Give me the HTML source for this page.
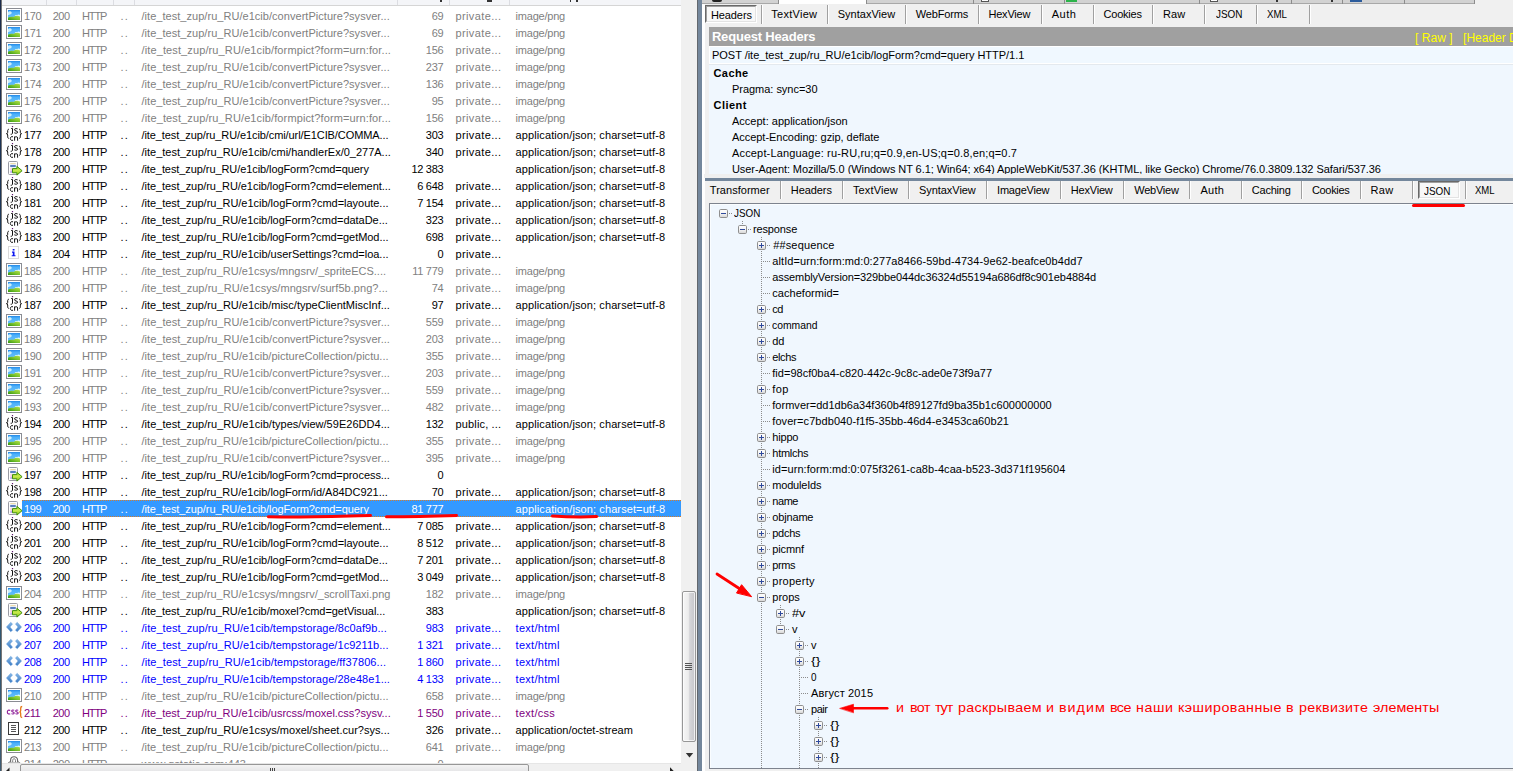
<!DOCTYPE html>
<html><head><meta charset="utf-8"><title>Fiddler</title>
<style>
*{box-sizing:border-box;margin:0;padding:0}
html,body{width:1513px;height:771px;overflow:hidden}
body{position:relative;background:#f0f0f0;font-family:"Liberation Sans",sans-serif;font-size:11px;color:#000}
.a{position:absolute}
.t{position:absolute;white-space:pre;line-height:17px;height:17px}
#list{position:absolute;left:2px;top:0;width:679px;height:763px;background:#fff;overflow:hidden}
.r{position:absolute;left:0;width:679px;height:17px}
.r span{position:absolute;top:1px;white-space:pre;line-height:17px;height:17px}
.r svg{position:absolute;left:3px;top:0}
.c1{left:22.1px;letter-spacing:-0.45px}
.c2{left:50.7px;letter-spacing:-0.45px}
.c3{left:80px;letter-spacing:-1.1px}
.c4{left:118.6px;letter-spacing:1.2px}
.c5{left:139.5px;letter-spacing:0.045px}
.c6{right:237.7px;letter-spacing:-0.3px}
.c7{left:453.5px;letter-spacing:0.38px}
.c8{left:513.6px;letter-spacing:0.1px}
.tab{position:absolute;white-space:pre;line-height:14px;height:14px}
.sep{position:absolute;width:2px;height:19px;border-left:1px solid #a0a0a0;border-right:1px solid #fff}
.tr{position:absolute;white-space:pre;line-height:16px;height:16px}
.b{font-weight:bold}
</style></head><body>

<svg width="0" height="0" style="position:absolute">
<defs>
<linearGradient id="gsky" x1="0" y1="0" x2="0" y2="1"><stop offset="0" stop-color="#2388e6"/><stop offset=".22" stop-color="#4cb0fa"/><stop offset="1" stop-color="#70c6fb"/></linearGradient>
<linearGradient id="ggr" x1="0" y1="1" x2="1" y2="0"><stop offset="0" stop-color="#2f9410"/><stop offset=".5" stop-color="#7cc42e"/><stop offset="1" stop-color="#b4e048"/></linearGradient>
<linearGradient id="gar" x1="0" y1="0" x2="0" y2="1"><stop offset="0" stop-color="#a6d822"/><stop offset=".45" stop-color="#c8ea50"/><stop offset="1" stop-color="#8cc80a"/></linearGradient>
<linearGradient id="gch" x1="0" y1="0" x2="0" y2="1"><stop offset="0" stop-color="#86b8e8"/><stop offset="1" stop-color="#3c7cc4"/></linearGradient>
<linearGradient id="gbx" x1="0" y1="0" x2="0" y2="1"><stop offset="0" stop-color="#ffffff"/><stop offset=".5" stop-color="#f4f4f4"/><stop offset="1" stop-color="#d4d4d4"/></linearGradient>
<symbol id="i-img" viewBox="0 0 20 17">
 <rect x="1.5" y="1.5" width="15" height="13" fill="#fff" stroke="#8a8c93"/>
 <rect x="3" y="3" width="12" height="10" fill="url(#gsky)"/>
 <path d="M3 5.2c.9-1.2 3-1.3 3.6.1.5 1.200-.8 2.400-2 2.100-.6.700-1.200.600-1.600.500z" fill="#d6f4fb" opacity=".9"/>
 <path d="M9.700 8.900c.4-1 1.700-1.200 2.400-.6.500-1 2.200-1.300 2.900-.3v2.500h-5.300z" fill="#e0f9fc" opacity=".95"/>
 <path d="M3 10.800c1.400-.9 3.600-1 5.400-.9 1.600-1.100 4.200-1.500 6.600-.5v3.600h-12z" fill="url(#ggr)"/>
</symbol>
<symbol id="i-json" viewBox="0 0 20 17">
 <g fill="none" stroke="#111" stroke-width="1" stroke-linecap="butt">
  <path d="M3.900 3.300c-1 0-1.200.5-1.200 1.400v1.700c0 .8-.4 1.200-1.300 1.300.9.100 1.300.5 1.300 1.300v1.900c0 .9.200 1.400 1.200 1.400"/>
  <path d="M14.100 3.300c1 0 1.200.5 1.200 1.400v1.700c0 .8.400 1.200 1.300 1.300-.9.100-1.300.5-1.300 1.300v1.900c0 .9-.2 1.400-1.200 1.400"/>
  <path d="M6.200 2.500h1.300v4.600c0 .9-.6 1.200-1.800 1.200"/>
  <path d="M12.600 2.900c-.6-.4-3.100-.7-3.100.9 0 1.600 3.200.8 3.200 2.300 0 1.400-2.600 1.300-3.400.7"/>
  <path d="M8 10.800c-1.700-.6-2.700.4-2.700 1.700 0 1.500 1.200 2.300 2.700 1.700"/>
  <path d="M9.600 14.700v-4.200M9.600 11.500c.7-.9 3-1.300 3 .5v2.700"/>
 </g>
 <rect x="6.900" y=".1" width="1.200" height="1.100" fill="#500060"/>
</symbol>
<symbol id="i-post" viewBox="0 0 20 17"><g transform="translate(-2 0)">
 <rect x="5.500" y="1.500" width="9" height="13" rx="1" fill="#fdfdfd" stroke="#999ba3"/>
 <rect x="7.300" y="3.200" width="5.400" height=".9" fill="#e6d49a"/>
 <rect x="7.200" y="4.900" width="5.600" height="2.200" fill="#587fc0"/>
 <rect x="7.200" y="8" width="2" height="2.800" fill="#f7cfe0"/>
 <rect x="7.200" y="10.800" width="2" height="2.200" fill="#c7b0ee"/>
 <path d="M9.500 8.600h4.400v-2.300l5.200 4.400-5.200 4.400v-2.300h-4.400z" fill="url(#gar)" stroke="#3e8e0e" stroke-width="1" stroke-linejoin="round"/>
</g></symbol>
<symbol id="i-info" viewBox="0 0 20 17"><g transform="translate(-2 -1)">
 <rect x="5.500" y="2.500" width="10" height="12" fill="#fff" stroke="#b4b4b4" stroke-dasharray="1 1"/>
 <rect x="9.700" y="5" width="1.800" height="1.500" fill="#0a14f0"/>
 <path d="M9 7.600h2.500v3.600h1v1.100h-3.800v-1.100h1.100v-2.500h-.8z" fill="#0a14f0"/>
</g></symbol>
<symbol id="i-html" viewBox="0 0 20 17"><g transform="translate(-2 0)">
 <path d="M7.700 3.300l1.900 1.600-2.600 3.100 2.600 3.200-1.900 1.500-4.300-4.700z" fill="url(#gch)" stroke="#5b94d4" stroke-width=".4"/>
 <path d="M14.300 3.300l-1.900 1.600 2.600 3.100-2.600 3.200 1.900 1.500 4.300-4.700z" fill="url(#gch)" stroke="#5b94d4" stroke-width=".4"/>
</g></symbol>
<symbol id="i-css" viewBox="0 0 20 17"><g transform="translate(-2 0)">
 <g fill="none" stroke="#8c1a96" stroke-width="1.100">
  <path d="M7.200 6.400c-1.400-.7-2.900-.2-2.900 1.700 0 1.800 1.500 2.300 2.900 1.600"/>
  <path d="M11.200 6.400c-.7-.5-2.500-.6-2.500.6 0 1.300 2.500.6 2.500 2 0 1.200-2 1.100-2.700.6"/>
  <path d="M15.200 6.400c-.7-.5-2.500-.6-2.500.6 0 1.300 2.500.6 2.500 2 0 1.200-2 1.100-2.700.6"/>
 </g>
 <path d="M19.200 2.500c-1.400 0-1.500.6-1.500 1.500v2.600c0 .9-.3 1.300-1.200 1.400.9.100 1.200.5 1.200 1.400v2.600c0 .9.100 1.500 1.500 1.500" fill="none" stroke="#e67817" stroke-width="1.300"/>
</g></symbol>
<symbol id="i-doc" viewBox="0 0 20 17"><g transform="translate(-2 0)">
 <rect x="5.500" y="1.500" width="10" height="12" fill="#fff" stroke="#3a3a3a"/>
 <path d="M8 4.500h5M8 6.500h5M8 8.500h5M8 10.500h5" stroke="#555" stroke-width="1"/>
</g></symbol>
<symbol id="i-lock" viewBox="0 0 20 17">
 <path d="M5.600 7.200v-2c0-4.600 7-4.600 7 0v2" fill="none" stroke="#666" stroke-width="1.100"/>
 <path d="M7.700 7.200v-1.800c0-2.200 2.800-2.200 2.800 0v1.800" fill="none" stroke="#777" stroke-width="1"/>
 <path d="M3.500 8l1.600-1.800M14.700 8l-1.600-1.800" stroke="#888" stroke-width="1"/>
 <rect x="3.500" y="8" width="11.200" height="7" fill="#e6e6e6" stroke="#888"/>
</symbol>
<symbol id="bx-p" viewBox="0 0 9 9">
 <rect x=".5" y=".5" width="8" height="8" rx="1.200" fill="url(#gbx)" stroke="#8f8f8f"/>
 <path d="M2 4.500h5M4.500 2v5" stroke="#2f4a9c" stroke-width="1"/>
</symbol>
<symbol id="bx-m" viewBox="0 0 9 9">
 <rect x=".5" y=".5" width="8" height="8" rx="1.200" fill="url(#gbx)" stroke="#8f8f8f"/>
 <path d="M2 4.500h5" stroke="#2f4a9c" stroke-width="1"/>
</symbol>
</defs></svg>

<div class="a" style="left:0;top:0;width:2px;height:771px;background:#777"></div>
<div class="a" style="left:0;top:0;width:1.400px;height:771px;background:linear-gradient(#1b2b4b 0,#1c3556 25%,#1f4b68 50%,#2c5470 75%,#3d5b73 100%)"></div>
<div id="list">
<div class="a" style="left:0;top:0;width:679px;height:5px;background:#f4f5f8"></div>
<div class="a" style="left:0;top:5px;width:679px;height:1px;background:#d5d5d5"></div>
<div class="a" style="left:44px;top:0;width:1px;height:5px;background:#dcdde2"></div>
<div class="a" style="left:74px;top:0;width:1px;height:5px;background:#dcdde2"></div>
<div class="a" style="left:111px;top:0;width:1px;height:5px;background:#dcdde2"></div>
<div class="a" style="left:132px;top:0;width:1px;height:5px;background:#dcdde2"></div>
<div class="a" style="left:395px;top:0;width:1px;height:5px;background:#dcdde2"></div>
<div class="a" style="left:447px;top:0;width:1px;height:5px;background:#dcdde2"></div>
<div class="a" style="left:507px;top:0;width:1px;height:5px;background:#dcdde2"></div>
<div class="a" style="left:438px;top:0;width:1.6px;height:1.5px;background:#333"></div>
<div class="a" style="left:484.5px;top:0;width:5px;height:1.5px;background:#333"></div>
<div class="a" style="left:567.7px;top:0;width:1.6px;height:1.5px;background:#333"></div>
<div class="a" style="left:574px;top:0;width:1.6px;height:1.5px;background:#333"></div>
<div class="r" style="top:7px;color:#808080">
<svg width="20" height="17"><use href="#i-img"/></svg>
<span class="c1">170</span><span class="c2">200</span><span class="c3">HTTP</span><span class="c4">..</span><span class="c5" style="letter-spacing:0.037px">/ite_test_zup/ru_RU/e1cib/convertPicture?sysver...</span><span class="c6">69</span><span class="c7">private...</span><span class="c8" style="letter-spacing:-0.22px">image/png</span></div>
<div class="r" style="top:24px;color:#808080">
<svg width="20" height="17"><use href="#i-img"/></svg>
<span class="c1">171</span><span class="c2">200</span><span class="c3">HTTP</span><span class="c4">..</span><span class="c5" style="letter-spacing:0.037px">/ite_test_zup/ru_RU/e1cib/convertPicture?sysver...</span><span class="c6">69</span><span class="c7">private...</span><span class="c8" style="letter-spacing:-0.22px">image/png</span></div>
<div class="r" style="top:41px;color:#808080">
<svg width="20" height="17"><use href="#i-img"/></svg>
<span class="c1">172</span><span class="c2">200</span><span class="c3">HTTP</span><span class="c4">..</span><span class="c5" style="letter-spacing:0.118px">/ite_test_zup/ru_RU/e1cib/formpict?form=urn:for...</span><span class="c6">156</span><span class="c7">private...</span><span class="c8" style="letter-spacing:-0.22px">image/png</span></div>
<div class="r" style="top:58px;color:#808080">
<svg width="20" height="17"><use href="#i-img"/></svg>
<span class="c1">173</span><span class="c2">200</span><span class="c3">HTTP</span><span class="c4">..</span><span class="c5" style="letter-spacing:0.037px">/ite_test_zup/ru_RU/e1cib/convertPicture?sysver...</span><span class="c6">237</span><span class="c7">private...</span><span class="c8" style="letter-spacing:-0.22px">image/png</span></div>
<div class="r" style="top:75px;color:#808080">
<svg width="20" height="17"><use href="#i-img"/></svg>
<span class="c1">174</span><span class="c2">200</span><span class="c3">HTTP</span><span class="c4">..</span><span class="c5" style="letter-spacing:0.037px">/ite_test_zup/ru_RU/e1cib/convertPicture?sysver...</span><span class="c6">136</span><span class="c7">private...</span><span class="c8" style="letter-spacing:-0.22px">image/png</span></div>
<div class="r" style="top:92px;color:#808080">
<svg width="20" height="17"><use href="#i-img"/></svg>
<span class="c1">175</span><span class="c2">200</span><span class="c3">HTTP</span><span class="c4">..</span><span class="c5" style="letter-spacing:0.037px">/ite_test_zup/ru_RU/e1cib/convertPicture?sysver...</span><span class="c6">95</span><span class="c7">private...</span><span class="c8" style="letter-spacing:-0.22px">image/png</span></div>
<div class="r" style="top:109px;color:#808080">
<svg width="20" height="17"><use href="#i-img"/></svg>
<span class="c1">176</span><span class="c2">200</span><span class="c3">HTTP</span><span class="c4">..</span><span class="c5" style="letter-spacing:0.118px">/ite_test_zup/ru_RU/e1cib/formpict?form=urn:for...</span><span class="c6">156</span><span class="c7">private...</span><span class="c8" style="letter-spacing:-0.22px">image/png</span></div>
<div class="r" style="top:126px;color:#000">
<svg width="20" height="17"><use href="#i-json"/></svg>
<span class="c1">177</span><span class="c2">200</span><span class="c3">HTTP</span><span class="c4">..</span><span class="c5" style="letter-spacing:-0.090px">/ite_test_zup/ru_RU/e1cib/cmi/url/E1CIB/COMMA...</span><span class="c6">303</span><span class="c7">private...</span><span class="c8">application/json; charset=utf-8</span></div>
<div class="r" style="top:143px;color:#000">
<svg width="20" height="17"><use href="#i-json"/></svg>
<span class="c1">178</span><span class="c2">200</span><span class="c3">HTTP</span><span class="c4">..</span><span class="c5" style="letter-spacing:-0.004px">/ite_test_zup/ru_RU/e1cib/cmi/handlerEx/0_277A...</span><span class="c6">340</span><span class="c7">private...</span><span class="c8">application/json; charset=utf-8</span></div>
<div class="r" style="top:160px;color:#000">
<svg width="20" height="17"><use href="#i-post"/></svg>
<span class="c1">179</span><span class="c2">200</span><span class="c3">HTTP</span><span class="c4">..</span><span class="c5" style="letter-spacing:-0.081px">/ite_test_zup/ru_RU/e1cib/logForm?cmd=query</span><span class="c6">12 383</span><span class="c8">application/json; charset=utf-8</span></div>
<div class="r" style="top:177px;color:#000">
<svg width="20" height="17"><use href="#i-json"/></svg>
<span class="c1">180</span><span class="c2">200</span><span class="c3">HTTP</span><span class="c4">..</span><span class="c5" style="letter-spacing:-0.049px">/ite_test_zup/ru_RU/e1cib/logForm?cmd=element...</span><span class="c6">6 648</span><span class="c7">private...</span><span class="c8">application/json; charset=utf-8</span></div>
<div class="r" style="top:194px;color:#000">
<svg width="20" height="17"><use href="#i-json"/></svg>
<span class="c1">181</span><span class="c2">200</span><span class="c3">HTTP</span><span class="c4">..</span><span class="c5" style="letter-spacing:-0.020px">/ite_test_zup/ru_RU/e1cib/logForm?cmd=layoute...</span><span class="c6">7 154</span><span class="c7">private...</span><span class="c8">application/json; charset=utf-8</span></div>
<div class="r" style="top:211px;color:#000">
<svg width="20" height="17"><use href="#i-json"/></svg>
<span class="c1">182</span><span class="c2">200</span><span class="c3">HTTP</span><span class="c4">..</span><span class="c5" style="letter-spacing:-0.036px">/ite_test_zup/ru_RU/e1cib/logForm?cmd=dataDe...</span><span class="c6">323</span><span class="c7">private...</span><span class="c8">application/json; charset=utf-8</span></div>
<div class="r" style="top:228px;color:#000">
<svg width="20" height="17"><use href="#i-json"/></svg>
<span class="c1">183</span><span class="c2">200</span><span class="c3">HTTP</span><span class="c4">..</span><span class="c5" style="letter-spacing:-0.047px">/ite_test_zup/ru_RU/e1cib/logForm?cmd=getMod...</span><span class="c6">698</span><span class="c7">private...</span><span class="c8">application/json; charset=utf-8</span></div>
<div class="r" style="top:245px;color:#000">
<svg width="20" height="17"><use href="#i-info"/></svg>
<span class="c1">184</span><span class="c2">204</span><span class="c3">HTTP</span><span class="c4">..</span><span class="c5" style="letter-spacing:-0.020px">/ite_test_zup/ru_RU/e1cib/userSettings?cmd=loa...</span><span class="c6">0</span><span class="c7">private...</span></div>
<div class="r" style="top:262px;color:#808080">
<svg width="20" height="17"><use href="#i-img"/></svg>
<span class="c1">185</span><span class="c2">200</span><span class="c3">HTTP</span><span class="c4">..</span><span class="c5" style="letter-spacing:-0.001px">/ite_test_zup/ru_RU/e1csys/mngsrv/_spriteECS....</span><span class="c6">11 779</span><span class="c7">private...</span><span class="c8" style="letter-spacing:-0.22px">image/png</span></div>
<div class="r" style="top:279px;color:#808080">
<svg width="20" height="17"><use href="#i-img"/></svg>
<span class="c1">186</span><span class="c2">200</span><span class="c3">HTTP</span><span class="c4">..</span><span class="c5" style="letter-spacing:0.050px">/ite_test_zup/ru_RU/e1csys/mngsrv/surf5b.png?...</span><span class="c6">74</span><span class="c7">private...</span><span class="c8" style="letter-spacing:-0.22px">image/png</span></div>
<div class="r" style="top:296px;color:#000">
<svg width="20" height="17"><use href="#i-json"/></svg>
<span class="c1">187</span><span class="c2">200</span><span class="c3">HTTP</span><span class="c4">..</span><span class="c5" style="letter-spacing:0.004px">/ite_test_zup/ru_RU/e1cib/misc/typeClientMiscInf...</span><span class="c6">97</span><span class="c7">private...</span><span class="c8">application/json; charset=utf-8</span></div>
<div class="r" style="top:313px;color:#808080">
<svg width="20" height="17"><use href="#i-img"/></svg>
<span class="c1">188</span><span class="c2">200</span><span class="c3">HTTP</span><span class="c4">..</span><span class="c5" style="letter-spacing:0.041px">/ite_test_zup/ru_RU/e1cib/convertPicture?sysver...</span><span class="c6">559</span><span class="c7">private...</span><span class="c8" style="letter-spacing:-0.22px">image/png</span></div>
<div class="r" style="top:330px;color:#808080">
<svg width="20" height="17"><use href="#i-img"/></svg>
<span class="c1">189</span><span class="c2">200</span><span class="c3">HTTP</span><span class="c4">..</span><span class="c5" style="letter-spacing:0.041px">/ite_test_zup/ru_RU/e1cib/convertPicture?sysver...</span><span class="c6">203</span><span class="c7">private...</span><span class="c8" style="letter-spacing:-0.22px">image/png</span></div>
<div class="r" style="top:347px;color:#808080">
<svg width="20" height="17"><use href="#i-img"/></svg>
<span class="c1">190</span><span class="c2">200</span><span class="c3">HTTP</span><span class="c4">..</span><span class="c5" style="letter-spacing:0.012px">/ite_test_zup/ru_RU/e1cib/pictureCollection/pictu...</span><span class="c6">355</span><span class="c7">private...</span><span class="c8" style="letter-spacing:-0.22px">image/png</span></div>
<div class="r" style="top:364px;color:#808080">
<svg width="20" height="17"><use href="#i-img"/></svg>
<span class="c1">191</span><span class="c2">200</span><span class="c3">HTTP</span><span class="c4">..</span><span class="c5" style="letter-spacing:0.041px">/ite_test_zup/ru_RU/e1cib/convertPicture?sysver...</span><span class="c6">203</span><span class="c7">private...</span><span class="c8" style="letter-spacing:-0.22px">image/png</span></div>
<div class="r" style="top:381px;color:#808080">
<svg width="20" height="17"><use href="#i-img"/></svg>
<span class="c1">192</span><span class="c2">200</span><span class="c3">HTTP</span><span class="c4">..</span><span class="c5" style="letter-spacing:0.041px">/ite_test_zup/ru_RU/e1cib/convertPicture?sysver...</span><span class="c6">559</span><span class="c7">private...</span><span class="c8" style="letter-spacing:-0.22px">image/png</span></div>
<div class="r" style="top:398px;color:#808080">
<svg width="20" height="17"><use href="#i-img"/></svg>
<span class="c1">193</span><span class="c2">200</span><span class="c3">HTTP</span><span class="c4">..</span><span class="c5" style="letter-spacing:0.041px">/ite_test_zup/ru_RU/e1cib/convertPicture?sysver...</span><span class="c6">482</span><span class="c7">private...</span><span class="c8" style="letter-spacing:-0.22px">image/png</span></div>
<div class="r" style="top:415px;color:#000">
<svg width="20" height="17"><use href="#i-json"/></svg>
<span class="c1">194</span><span class="c2">200</span><span class="c3">HTTP</span><span class="c4">..</span><span class="c5" style="letter-spacing:0.029px">/ite_test_zup/ru_RU/e1cib/types/view/59E26DD4...</span><span class="c6">132</span><span class="c7" style="letter-spacing:0.15px">public, ...</span><span class="c8">application/json; charset=utf-8</span></div>
<div class="r" style="top:432px;color:#808080">
<svg width="20" height="17"><use href="#i-img"/></svg>
<span class="c1">195</span><span class="c2">200</span><span class="c3">HTTP</span><span class="c4">..</span><span class="c5" style="letter-spacing:0.012px">/ite_test_zup/ru_RU/e1cib/pictureCollection/pictu...</span><span class="c6">355</span><span class="c7">private...</span><span class="c8" style="letter-spacing:-0.22px">image/png</span></div>
<div class="r" style="top:449px;color:#808080">
<svg width="20" height="17"><use href="#i-img"/></svg>
<span class="c1">196</span><span class="c2">200</span><span class="c3">HTTP</span><span class="c4">..</span><span class="c5" style="letter-spacing:0.041px">/ite_test_zup/ru_RU/e1cib/convertPicture?sysver...</span><span class="c6">395</span><span class="c7">private...</span><span class="c8" style="letter-spacing:-0.22px">image/png</span></div>
<div class="r" style="top:466px;color:#000">
<svg width="20" height="17"><use href="#i-post"/></svg>
<span class="c1">197</span><span class="c2">200</span><span class="c3">HTTP</span><span class="c4">..</span><span class="c5" style="letter-spacing:-0.055px">/ite_test_zup/ru_RU/e1cib/logForm?cmd=process...</span><span class="c6">0</span></div>
<div class="r" style="top:483px;color:#000">
<svg width="20" height="17"><use href="#i-json"/></svg>
<span class="c1">198</span><span class="c2">200</span><span class="c3">HTTP</span><span class="c4">..</span><span class="c5" style="letter-spacing:-0.028px">/ite_test_zup/ru_RU/e1cib/logForm/id/A84DC921...</span><span class="c6">70</span><span class="c7">private...</span><span class="c8">application/json; charset=utf-8</span></div>
<div class="r" style="top:500px;color:#fff">
<div class="a" style="left:20px;top:0;width:659px;height:17px;background:#3399ff;border-top:1px dotted #d67c2a;border-bottom:1px dotted #d67c2a"></div>
<svg width="20" height="17"><use href="#i-post"/></svg>
<span class="c1">199</span><span class="c2">200</span><span class="c3">HTTP</span><span class="c4">..</span><span class="c5" style="letter-spacing:-0.081px">/ite_test_zup/ru_RU/e1cib/logForm?cmd=query</span><span class="c6">81 777</span><span class="c8">application/json; charset=utf-8</span></div>
<div class="r" style="top:517px;color:#000">
<svg width="20" height="17"><use href="#i-json"/></svg>
<span class="c1">200</span><span class="c2">200</span><span class="c3">HTTP</span><span class="c4">..</span><span class="c5" style="letter-spacing:-0.049px">/ite_test_zup/ru_RU/e1cib/logForm?cmd=element...</span><span class="c6">7 085</span><span class="c7">private...</span><span class="c8">application/json; charset=utf-8</span></div>
<div class="r" style="top:534px;color:#000">
<svg width="20" height="17"><use href="#i-json"/></svg>
<span class="c1">201</span><span class="c2">200</span><span class="c3">HTTP</span><span class="c4">..</span><span class="c5" style="letter-spacing:-0.020px">/ite_test_zup/ru_RU/e1cib/logForm?cmd=layoute...</span><span class="c6">8 512</span><span class="c7">private...</span><span class="c8">application/json; charset=utf-8</span></div>
<div class="r" style="top:551px;color:#000">
<svg width="20" height="17"><use href="#i-json"/></svg>
<span class="c1">202</span><span class="c2">200</span><span class="c3">HTTP</span><span class="c4">..</span><span class="c5" style="letter-spacing:-0.036px">/ite_test_zup/ru_RU/e1cib/logForm?cmd=dataDe...</span><span class="c6">7 201</span><span class="c7">private...</span><span class="c8">application/json; charset=utf-8</span></div>
<div class="r" style="top:568px;color:#000">
<svg width="20" height="17"><use href="#i-json"/></svg>
<span class="c1">203</span><span class="c2">200</span><span class="c3">HTTP</span><span class="c4">..</span><span class="c5" style="letter-spacing:-0.047px">/ite_test_zup/ru_RU/e1cib/logForm?cmd=getMod...</span><span class="c6">3 049</span><span class="c7">private...</span><span class="c8">application/json; charset=utf-8</span></div>
<div class="r" style="top:585px;color:#808080">
<svg width="20" height="17"><use href="#i-img"/></svg>
<span class="c1">204</span><span class="c2">200</span><span class="c3">HTTP</span><span class="c4">..</span><span class="c5" style="letter-spacing:-0.012px">/ite_test_zup/ru_RU/e1csys/mngsrv/_scrollTaxi.png</span><span class="c6">182</span><span class="c7">private...</span><span class="c8" style="letter-spacing:-0.22px">image/png</span></div>
<div class="r" style="top:602px;color:#000">
<svg width="20" height="17"><use href="#i-post"/></svg>
<span class="c1">205</span><span class="c2">200</span><span class="c3">HTTP</span><span class="c4">..</span><span class="c5" style="letter-spacing:-0.056px">/ite_test_zup/ru_RU/e1cib/moxel?cmd=getVisual...</span><span class="c6">383</span><span class="c8">application/json; charset=utf-8</span></div>
<div class="r" style="top:619px;color:#0000ff">
<svg width="20" height="17"><use href="#i-html"/></svg>
<span class="c1">206</span><span class="c2">200</span><span class="c3">HTTP</span><span class="c4">..</span><span class="c5" style="letter-spacing:0.065px">/ite_test_zup/ru_RU/e1cib/tempstorage/8c0af9b...</span><span class="c6">983</span><span class="c7">private...</span><span class="c8" style="letter-spacing:0.28px">text/html</span></div>
<div class="r" style="top:636px;color:#0000ff">
<svg width="20" height="17"><use href="#i-html"/></svg>
<span class="c1">207</span><span class="c2">200</span><span class="c3">HTTP</span><span class="c4">..</span><span class="c5" style="letter-spacing:0.056px">/ite_test_zup/ru_RU/e1cib/tempstorage/1c9211b...</span><span class="c6">1 321</span><span class="c7">private...</span><span class="c8" style="letter-spacing:0.28px">text/html</span></div>
<div class="r" style="top:653px;color:#0000ff">
<svg width="20" height="17"><use href="#i-html"/></svg>
<span class="c1">208</span><span class="c2">200</span><span class="c3">HTTP</span><span class="c4">..</span><span class="c5" style="letter-spacing:0.106px">/ite_test_zup/ru_RU/e1cib/tempstorage/ff37806...</span><span class="c6">1 860</span><span class="c7">private...</span><span class="c8" style="letter-spacing:0.28px">text/html</span></div>
<div class="r" style="top:670px;color:#0000ff">
<svg width="20" height="17"><use href="#i-html"/></svg>
<span class="c1">209</span><span class="c2">200</span><span class="c3">HTTP</span><span class="c4">..</span><span class="c5" style="letter-spacing:0.055px">/ite_test_zup/ru_RU/e1cib/tempstorage/28e48e1...</span><span class="c6">4 133</span><span class="c7">private...</span><span class="c8" style="letter-spacing:0.28px">text/html</span></div>
<div class="r" style="top:687px;color:#808080">
<svg width="20" height="17"><use href="#i-img"/></svg>
<span class="c1">210</span><span class="c2">200</span><span class="c3">HTTP</span><span class="c4">..</span><span class="c5" style="letter-spacing:0.012px">/ite_test_zup/ru_RU/e1cib/pictureCollection/pictu...</span><span class="c6">658</span><span class="c7">private...</span><span class="c8" style="letter-spacing:-0.22px">image/png</span></div>
<div class="r" style="top:704px;color:#800080">
<svg width="20" height="17"><use href="#i-css"/></svg>
<span class="c1">211</span><span class="c2">200</span><span class="c3">HTTP</span><span class="c4">..</span><span class="c5" style="letter-spacing:-0.013px">/ite_test_zup/ru_RU/e1cib/usrcss/moxel.css?sysv...</span><span class="c6">1 550</span><span class="c7">private...</span><span class="c8" style="letter-spacing:0.28px">text/css</span></div>
<div class="r" style="top:721px;color:#000">
<svg width="20" height="17"><use href="#i-doc"/></svg>
<span class="c1">212</span><span class="c2">200</span><span class="c3">HTTP</span><span class="c4">..</span><span class="c5" style="letter-spacing:0.027px">/ite_test_zup/ru_RU/e1csys/moxel/sheet.cur?sys...</span><span class="c6">326</span><span class="c7">private...</span><span class="c8" style="letter-spacing:0.02px">application/octet-stream</span></div>
<div class="r" style="top:738px;color:#808080">
<svg width="20" height="17"><use href="#i-img"/></svg>
<span class="c1">213</span><span class="c2">200</span><span class="c3">HTTP</span><span class="c4">..</span><span class="c5" style="letter-spacing:0.012px">/ite_test_zup/ru_RU/e1cib/pictureCollection/pictu...</span><span class="c6">641</span><span class="c7">private...</span><span class="c8" style="letter-spacing:-0.22px">image/png</span></div>
<div class="r" style="top:755px;color:#808080">
<svg width="20" height="17"><use href="#i-lock"/></svg>
<span class="c1">214</span><span class="c2">200</span><span class="c3">HTTP</span><span class="c4">..</span><span class="c5" style="letter-spacing:0.065px">www.gstatic.com:443</span><span class="c6">0</span></div>
</div>
<div class="a" style="left:681px;top:0;width:16px;height:764px;background:#f0f0f0"></div>
<div class="a" style="left:682px;top:591px;width:14px;height:151px;border:1px solid #979797;border-radius:2px;background:linear-gradient(90deg,#f6f6f6 0,#ececec 45%,#d6d6d9 55%,#c6c6ca 100%);box-shadow:inset 0 0 0 1px rgba(255,255,255,.7)"></div>
<div class="a" style="left:685px;top:663px;width:7px;height:1px;background:#555"></div>
<div class="a" style="left:685px;top:665px;width:7px;height:1px;background:#555"></div>
<div class="a" style="left:685px;top:667px;width:7px;height:1px;background:#555"></div>
<div class="a" style="left:685px;top:669px;width:7px;height:1px;background:#555"></div>
<svg class="a" style="left:684px;top:751px" width="11" height="8"><path d="M1.800 2h7.400l-3.700 4.400z" fill="#333"/></svg>
<div class="a" style="left:2px;top:763px;width:695px;height:8px;background:#f0f0f0"></div>
<div class="a" style="left:2px;top:763px;width:679px;height:1px;background:#e6e6e6"></div>
<div class="a" style="left:20px;top:764px;width:509px;height:9px;border:1px solid #979797;border-radius:2px;background:linear-gradient(#f4f4f4,#e4e4e6)"></div>
<div class="a" style="left:270px;top:768px;width:1px;height:3px;background:#444"></div>
<div class="a" style="left:272px;top:768px;width:1px;height:3px;background:#444"></div>
<div class="a" style="left:274px;top:768px;width:1px;height:3px;background:#444"></div>
<svg class="a" style="left:3px;top:764px" width="9" height="7"><path d="M6.500 3.500l-3.500 3.500 3.500 3.500z" fill="#222"/></svg>
<svg class="a" style="left:667px;top:764px" width="9" height="7"><path d="M3 3.300l4 4-4 4z" fill="#222"/></svg>
<div class="a" style="left:697px;top:0;width:1px;height:771px;background:#62676d"></div>
<div class="a" style="left:698px;top:0;width:4px;height:771px;background:#74879c"></div>
<div class="a" style="left:702px;top:0;width:3px;height:771px;background:#fff"></div>
<div class="a" style="left:702px;top:0;width:772px;height:3px;background:#d2d2d2"></div>
<div class="a" style="left:702px;top:3px;width:772px;height:1px;background:#a8a8a8"></div>
<div class="a" style="left:778px;top:0;width:88px;height:4px;background:#fff"></div>
<div class="a" style="left:778px;top:0;width:1px;height:4px;background:#8c8c8c"></div>
<div class="a" style="left:866px;top:0;width:1px;height:4px;background:#8c8c8c"></div>
<div class="a" style="left:973px;top:0;width:1px;height:4px;background:#8c8c8c"></div>
<div class="a" style="left:1064px;top:0;width:1px;height:4px;background:#8c8c8c"></div>
<div class="a" style="left:1199px;top:0;width:1px;height:4px;background:#8c8c8c"></div>
<div class="a" style="left:1291px;top:0;width:1px;height:4px;background:#8c8c8c"></div>
<div class="a" style="left:1342px;top:0;width:1px;height:4px;background:#8c8c8c"></div>
<div class="a" style="left:1404px;top:0;width:1px;height:4px;background:#8c8c8c"></div>
<div class="a" style="left:1474px;top:0;width:1px;height:4px;background:#8c8c8c"></div>
<div class="a" style="left:1066px;top:0;width:11px;height:2px;background:#2cb34a"></div>
<div class="a" style="left:981px;top:0;width:8px;height:2px;background:#fff;border:1px solid #555;border-top:0"></div>
<div class="a" style="left:1210px;top:0;width:8px;height:2px;background:#fff;border:1px solid #555;border-top:0"></div>
<div class="a" style="left:1350px;top:0;width:12px;height:2px;background:#2c5c9c"></div>
<div class="a" style="left:1276px;top:0;width:2px;height:1.500px;background:#333"></div>
<div class="a" style="left:1331px;top:0;width:2px;height:1.500px;background:#333"></div>
<div class="a" style="left:712px;top:0;width:10px;height:1.5px;background:#222;border-radius:0 0 5px 5px"></div>
<div class="a" style="left:705px;top:5px;width:52px;height:18px;border:1px solid;border-color:#696969 #fff #fff #696969;background:#f8f8f8"></div>
<div class="a" style="left:706px;top:6px;width:50px;height:16px;border:1px solid;border-color:#a0a0a0 #e3e3e3 #e3e3e3 #a0a0a0"></div>
<div class="tab" style="left:710.90px;top:8px;letter-spacing:-0.080px;">Headers</div>
<div class="tab" style="left:771.30px;top:7px;letter-spacing:0.267px;">TextView</div>
<div class="tab" style="left:837.70px;top:7px;letter-spacing:0.013px;">SyntaxView</div>
<div class="tab" style="left:915.80px;top:7px;letter-spacing:-0.156px;">WebForms</div>
<div class="tab" style="left:988.40px;top:7px;letter-spacing:-0.186px;">HexView</div>
<div class="tab" style="left:1051.80px;top:7px;letter-spacing:0.453px;">Auth</div>
<div class="tab" style="left:1103.50px;top:7px;letter-spacing:-0.208px;">Cookies</div>
<div class="tab" style="left:1162.90px;top:7px;letter-spacing:0.142px;">Raw</div>
<div class="tab" style="left:1215.50px;top:7px;transform:scaleX(0.903);transform-origin:0 0;">JSON</div>
<div class="tab" style="left:1266.50px;top:7px;transform:scaleX(0.884);transform-origin:0 0;">XML</div>
<div class="sep" style="left:761px;top:5px"></div>
<div class="sep" style="left:827px;top:5px"></div>
<div class="sep" style="left:905px;top:5px"></div>
<div class="sep" style="left:978px;top:5px"></div>
<div class="sep" style="left:1041px;top:5px"></div>
<div class="sep" style="left:1093px;top:5px"></div>
<div class="sep" style="left:1152px;top:5px"></div>
<div class="sep" style="left:1204px;top:5px"></div>
<div class="sep" style="left:1256px;top:5px"></div>
<div class="sep" style="left:1309px;top:5px"></div>
<div class="a" style="left:709px;top:27px;width:804px;height:19px;background:#a0a0a0"></div>
<div class="tr" style="left:711.90px;top:29px;letter-spacing:-0.180px;font-size:13px;font-weight:bold;color:#fff">Request Headers</div>
<div class="tr" style="left:1415.10px;top:30px;letter-spacing:0.026px;font-size:12px;color:#ffff00">[ Raw ]</div>
<div class="tr" style="left:1463.10px;top:30px;font-size:12px;color:#ffff00">[Header Definitions]</div>
<div class="a" style="left:709px;top:46px;width:804px;height:19px;background:#fff"></div>
<div class="a" style="left:710px;top:47px;width:803px;height:16px;background:#f0f8ff"></div>
<div class="a" style="left:709px;top:64px;width:804px;height:1px;background:#e4e9ee"></div>
<div class="a" style="left:709px;top:65px;width:804px;height:109px;background:#f0f7fe;overflow:hidden" id="rq"></div>
<div class="tr" style="left:712.00px;top:47px;letter-spacing:-0.026px;">POST /ite_test_zup/ru_RU/e1cib/logForm?cmd=query HTTP/1.1</div>
<div class="tr" style="left:713.50px;top:65px;letter-spacing:0.417px;font-weight:bold">Cache</div>
<div class="tr" style="left:732.00px;top:81px;letter-spacing:-0.029px;">Pragma: sync=30</div>
<div class="tr" style="left:713.50px;top:97px;letter-spacing:0.487px;font-weight:bold">Client</div>
<div class="tr" style="left:732.00px;top:113px;letter-spacing:0.005px;">Accept: application/json</div>
<div class="tr" style="left:732.00px;top:129px;letter-spacing:-0.041px;">Accept-Encoding: gzip, deflate</div>
<div class="tr" style="left:732.00px;top:145px;letter-spacing:0.162px;">Accept-Language: ru-RU,ru;q=0.9,en-US;q=0.8,en;q=0.7</div>
<div class="tr" style="left:732.00px;top:161px;letter-spacing:-0.073px;">User-Agent: Mozilla/5.0 (Windows NT 6.1; Win64; x64) AppleWebKit/537.36 (KHTML, like Gecko) Chrome/76.0.3809.132 Safari/537.36</div>
<div class="a" style="left:704px;top:174px;width:809px;height:4px;background:#f0f0f0"></div>
<div class="a" style="left:705px;top:178px;width:808px;height:3px;background:#74879c"></div>
<div class="a" style="left:1418px;top:181px;width:42px;height:18px;border:1px solid;border-color:#696969 #fff #fff #696969;background:#f8f8f8"></div>
<div class="a" style="left:1419px;top:182px;width:40px;height:16px;border:1px solid;border-color:#a0a0a0 #e3e3e3 #e3e3e3 #a0a0a0"></div>
<div class="tab" style="left:709.80px;top:183px;letter-spacing:0.030px;">Transformer</div>
<div class="tab" style="left:790.80px;top:183px;letter-spacing:-0.080px;">Headers</div>
<div class="tab" style="left:852.90px;top:183px;letter-spacing:0.153px;">TextView</div>
<div class="tab" style="left:919.00px;top:183px;letter-spacing:-0.053px;">SyntaxView</div>
<div class="tab" style="left:997.10px;top:183px;letter-spacing:-0.227px;">ImageView</div>
<div class="tab" style="left:1070.80px;top:183px;letter-spacing:-0.203px;">HexView</div>
<div class="tab" style="left:1134.20px;top:183px;letter-spacing:-0.227px;">WebView</div>
<div class="tab" style="left:1200.50px;top:183px;letter-spacing:0.253px;">Auth</div>
<div class="tab" style="left:1251.80px;top:183px;letter-spacing:-0.227px;">Caching</div>
<div class="tab" style="left:1311.90px;top:183px;letter-spacing:-0.308px;">Cookies</div>
<div class="tab" style="left:1370.60px;top:183px;letter-spacing:0.292px;">Raw</div>
<div class="tab" style="left:1424.40px;top:184px;transform:scaleX(0.900);transform-origin:0 0;">JSON</div>
<div class="tab" style="left:1475.40px;top:183px;transform:scaleX(0.866);transform-origin:0 0;">XML</div>
<div class="sep" style="left:780px;top:181px;height:18px"></div>
<div class="sep" style="left:842px;top:181px;height:18px"></div>
<div class="sep" style="left:908px;top:181px;height:18px"></div>
<div class="sep" style="left:986px;top:181px;height:18px"></div>
<div class="sep" style="left:1060px;top:181px;height:18px"></div>
<div class="sep" style="left:1123px;top:181px;height:18px"></div>
<div class="sep" style="left:1189px;top:181px;height:18px"></div>
<div class="sep" style="left:1241px;top:181px;height:18px"></div>
<div class="sep" style="left:1301px;top:181px;height:18px"></div>
<div class="sep" style="left:1360px;top:181px;height:18px"></div>
<div class="sep" style="left:1412px;top:181px;height:18px"></div>
<div class="sep" style="left:1465px;top:181px;height:18px"></div>
<div class="a" style="left:709px;top:203px;width:810px;height:566px;border:1px solid #7d838e;background:#f0f7fe;box-shadow:inset 1px 1px 0 #fafdff"></div>
<div class="tr" style="left:734.40px;top:205px;transform:scaleX(0.896);transform-origin:0 0;">JSON</div>
<div class="tr" style="left:752.90px;top:221px;letter-spacing:-0.124px;">response</div>
<div class="tr" style="left:773.20px;top:237px;letter-spacing:0.150px;">##sequence</div>
<div class="tr" style="left:772.30px;top:253px;letter-spacing:0.086px;">altId=urn:form:md:0:277a8466-59bd-4734-9e62-beafce0b4dd7</div>
<div class="tr" style="left:772.30px;top:269px;letter-spacing:-0.114px;">assemblyVersion=329bbe044dc36324d55194a686df8c901eb4884d</div>
<div class="tr" style="left:772.30px;top:285px;letter-spacing:0.032px;">cacheformid=</div>
<div class="tr" style="left:772.30px;top:301px;letter-spacing:-0.425px;">cd</div>
<div class="tr" style="left:772.30px;top:317px;transform:scaleX(0.942);transform-origin:0 0;">command</div>
<div class="tr" style="left:772.30px;top:333px;letter-spacing:-0.050px;">dd</div>
<div class="tr" style="left:772.30px;top:349px;letter-spacing:-0.372px;">elchs</div>
<div class="tr" style="left:772.30px;top:365px;letter-spacing:0.014px;">fid=98cf0ba4-c820-442c-9c8c-ade0e73f9a77</div>
<div class="tr" style="left:772.30px;top:381px;letter-spacing:0.452px;">fop</div>
<div class="tr" style="left:772.30px;top:397px;letter-spacing:0.017px;">formver=dd1db6a34f360b4f89127fd9ba35b1c600000000</div>
<div class="tr" style="left:772.30px;top:413px;letter-spacing:0.067px;">fover=c7bdb040-f1f5-35bb-46d4-e3453ca60b21</div>
<div class="tr" style="left:772.30px;top:429px;letter-spacing:-0.180px;">hippo</div>
<div class="tr" style="left:772.30px;top:445px;letter-spacing:-0.284px;">htmlchs</div>
<div class="tr" style="left:772.30px;top:461px;letter-spacing:0.066px;">id=urn:form:md:0:075f3261-ca8b-4caa-b523-3d371f195604</div>
<div class="tr" style="left:772.30px;top:477px;letter-spacing:-0.196px;">moduleIds</div>
<div class="tr" style="left:772.30px;top:493px;letter-spacing:-0.444px;">name</div>
<div class="tr" style="left:772.30px;top:509px;letter-spacing:-0.167px;">objname</div>
<div class="tr" style="left:772.30px;top:525px;letter-spacing:-0.290px;">pdchs</div>
<div class="tr" style="left:772.30px;top:541px;letter-spacing:-0.141px;">picmnf</div>
<div class="tr" style="left:772.30px;top:557px;letter-spacing:-0.418px;">prms</div>
<div class="tr" style="left:772.30px;top:573px;letter-spacing:0.263px;">property</div>
<div class="tr" style="left:772.30px;top:589px;letter-spacing:-0.008px;">props</div>
<div class="tr" style="left:792.00px;top:605px;transform:scaleX(1.161);transform-origin:0 0;">#v</div>
<div class="tr" style="left:792.00px;top:621px;">v</div>
<div class="tr" style="left:811.00px;top:637px;">v</div>
<div class="tr" style="left:811.00px;top:653px;transform:scaleX(1.291);transform-origin:0 0;">{}</div>
<div class="tr" style="left:811.00px;top:669px;transform:scaleX(0.898);transform-origin:0 0;">0</div>
<div class="tr" style="left:811.00px;top:685px;letter-spacing:0.136px;">Август 2015</div>
<div class="tr" style="left:811.00px;top:701px;letter-spacing:-0.448px;">pair</div>
<div class="tr" style="left:830.10px;top:717px;transform:scaleX(1.277);transform-origin:0 0;">{}</div>
<div class="tr" style="left:830.10px;top:733px;transform:scaleX(1.277);transform-origin:0 0;">{}</div>
<div class="tr" style="left:830.10px;top:749px;transform:scaleX(1.277);transform-origin:0 0;">{}</div>
<svg class="a" style="left:0;top:0;pointer-events:none" width="1513" height="768" fill="none" stroke="#8c8c8c" stroke-width="1" stroke-dasharray="1 1"><path d="M729 213.5H732" /><path d="M748 229.5H751" /><path d="M767 245.5H770" /><path d="M761 261.5H771" /><path d="M761 277.5H771" /><path d="M761 293.5H771" /><path d="M767 309.5H770" /><path d="M767 325.5H770" /><path d="M767 341.5H770" /><path d="M767 357.5H770" /><path d="M761 373.5H771" /><path d="M767 389.5H770" /><path d="M761 405.5H771" /><path d="M761 421.5H771" /><path d="M767 437.5H770" /><path d="M767 453.5H770" /><path d="M761 469.5H771" /><path d="M767 485.5H770" /><path d="M767 501.5H770" /><path d="M767 517.5H770" /><path d="M767 533.5H770" /><path d="M767 549.5H770" /><path d="M767 565.5H770" /><path d="M767 581.5H770" /><path d="M767 597.5H770" /><path d="M786 613.5H789" /><path d="M786 629.5H789" /><path d="M805 645.5H808" /><path d="M805 661.5H808" /><path d="M799 677.5H809" /><path d="M799 693.5H809" /><path d="M805 709.5H808" /><path d="M824 725.5H827" /><path d="M824 741.5H827" /><path d="M824 757.5H827" /><path d="M742.5 221V225" /><path d="M761.5 237V768" /><path d="M780.5 605V625" /><path d="M799.5 637V768" /><path d="M818.5 717V768" /></svg>
<svg class="a" style="left:719px;top:209px" width="9" height="9"><use href="#bx-m"/></svg>
<svg class="a" style="left:738px;top:225px" width="9" height="9"><use href="#bx-m"/></svg>
<svg class="a" style="left:757px;top:241px" width="9" height="9"><use href="#bx-p"/></svg>
<svg class="a" style="left:757px;top:305px" width="9" height="9"><use href="#bx-p"/></svg>
<svg class="a" style="left:757px;top:321px" width="9" height="9"><use href="#bx-p"/></svg>
<svg class="a" style="left:757px;top:337px" width="9" height="9"><use href="#bx-p"/></svg>
<svg class="a" style="left:757px;top:353px" width="9" height="9"><use href="#bx-p"/></svg>
<svg class="a" style="left:757px;top:385px" width="9" height="9"><use href="#bx-p"/></svg>
<svg class="a" style="left:757px;top:433px" width="9" height="9"><use href="#bx-p"/></svg>
<svg class="a" style="left:757px;top:449px" width="9" height="9"><use href="#bx-p"/></svg>
<svg class="a" style="left:757px;top:481px" width="9" height="9"><use href="#bx-p"/></svg>
<svg class="a" style="left:757px;top:497px" width="9" height="9"><use href="#bx-p"/></svg>
<svg class="a" style="left:757px;top:513px" width="9" height="9"><use href="#bx-p"/></svg>
<svg class="a" style="left:757px;top:529px" width="9" height="9"><use href="#bx-p"/></svg>
<svg class="a" style="left:757px;top:545px" width="9" height="9"><use href="#bx-p"/></svg>
<svg class="a" style="left:757px;top:561px" width="9" height="9"><use href="#bx-p"/></svg>
<svg class="a" style="left:757px;top:577px" width="9" height="9"><use href="#bx-p"/></svg>
<svg class="a" style="left:757px;top:593px" width="9" height="9"><use href="#bx-m"/></svg>
<svg class="a" style="left:776px;top:609px" width="9" height="9"><use href="#bx-p"/></svg>
<svg class="a" style="left:776px;top:625px" width="9" height="9"><use href="#bx-m"/></svg>
<svg class="a" style="left:795px;top:641px" width="9" height="9"><use href="#bx-p"/></svg>
<svg class="a" style="left:795px;top:657px" width="9" height="9"><use href="#bx-p"/></svg>
<svg class="a" style="left:795px;top:705px" width="9" height="9"><use href="#bx-m"/></svg>
<svg class="a" style="left:814px;top:721px" width="9" height="9"><use href="#bx-p"/></svg>
<svg class="a" style="left:814px;top:737px" width="9" height="9"><use href="#bx-p"/></svg>
<svg class="a" style="left:814px;top:753px" width="9" height="9"><use href="#bx-p"/></svg>
<svg class="a" style="left:0;top:0" width="1513" height="771" fill="none" stroke="#ff0000" stroke-width="3" stroke-linecap="round"><path d="M268.500 516.800C300 517.300 340 516 370.500 515.600"/><path d="M386.500 516.800C410 516.800 440 516 456.500 515.400"/><path d="M552.500 516C565 516.800 585 517 596.500 516.600"/><path d="M1413.500 205.500H1463.500"/><path d="M717 574L740 589" stroke-width="2.800"/><path d="M853 708.300H887.300" stroke-width="2.400"/><path d="M751.400 596.400L741.600 584.700L736.700 592.700Z" fill="#ff0000" stroke-width="1" stroke-linejoin="round"/><path d="M840 708.300L853.500 704.200V712.500Z" fill="#ff0000" stroke-width=".6" stroke-linejoin="round"/></svg>
<div class="tr" style="left:896.00px;top:699.5px;letter-spacing:-0.447px;transform:scaleX(1.1);transform-origin:0 0;font-size:13px;color:#ff0000">и</div>
<div class="tr" style="left:909.50px;top:699.5px;letter-spacing:-0.518px;transform:scaleX(1.1);transform-origin:0 0;font-size:13px;color:#ff0000">вот</div>
<div class="tr" style="left:934.80px;top:699.5px;letter-spacing:-1.009px;transform:scaleX(1.1);transform-origin:0 0;font-size:13px;color:#ff0000">тут</div>
<div class="tr" style="left:958.30px;top:699.5px;letter-spacing:0.290px;transform:scaleX(1.1);transform-origin:0 0;font-size:13px;color:#ff0000">раскрываем</div>
<div class="tr" style="left:1045.90px;top:699.5px;letter-spacing:-0.357px;transform:scaleX(1.1);transform-origin:0 0;font-size:13px;color:#ff0000">и</div>
<div class="tr" style="left:1059.40px;top:699.5px;letter-spacing:0.921px;transform:scaleX(1.1);transform-origin:0 0;font-size:13px;color:#ff0000">видим</div>
<div class="tr" style="left:1109.70px;top:699.5px;letter-spacing:-0.523px;transform:scaleX(1.1);transform-origin:0 0;font-size:13px;color:#ff0000">все</div>
<div class="tr" style="left:1136.00px;top:699.5px;letter-spacing:0.509px;transform:scaleX(1.1);transform-origin:0 0;font-size:13px;color:#ff0000">наши</div>
<div class="tr" style="left:1178.10px;top:699.5px;letter-spacing:0.413px;transform:scaleX(1.1);transform-origin:0 0;font-size:13px;color:#ff0000">кэшированные</div>
<div class="tr" style="left:1286.00px;top:699.5px;letter-spacing:-0.088px;transform:scaleX(1.1);transform-origin:0 0;font-size:13px;color:#ff0000">в</div>
<div class="tr" style="left:1298.50px;top:699.5px;letter-spacing:0.269px;transform:scaleX(1.1);transform-origin:0 0;font-size:13px;color:#ff0000">реквизите</div>
<div class="tr" style="left:1372.60px;top:699.5px;letter-spacing:0.053px;transform:scaleX(1.1);transform-origin:0 0;font-size:13px;color:#ff0000">элементы</div>
</body></html>
